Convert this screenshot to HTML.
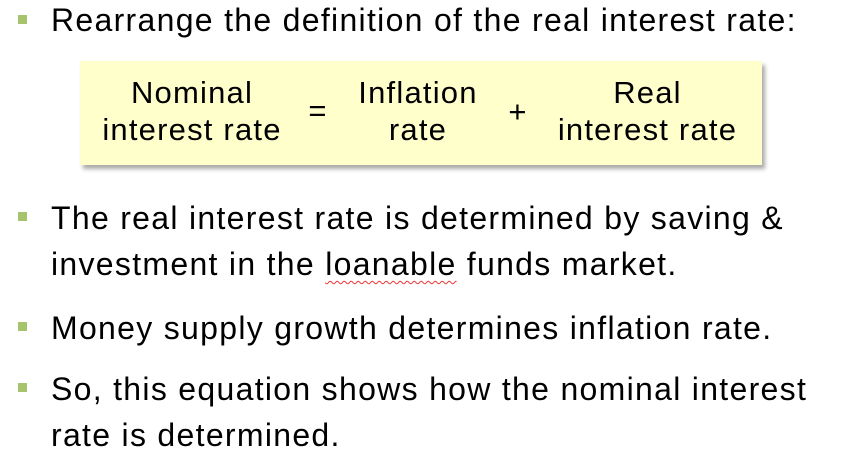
<!DOCTYPE html>
<html><head><style>
body{margin:0;width:844px;height:470px;background:#fff;position:relative;overflow:hidden;font-family:"Liberation Sans",Arial,sans-serif;color:#000}
.t{position:absolute;font-size:32px;line-height:46px;white-space:nowrap;letter-spacing:1.3px}
.b{position:absolute;width:9px;height:9px;background:#a6c46b}
.box{position:absolute;left:80px;top:61px;width:682px;height:104px;background:#ffffcc;box-shadow:3px 4px 4px #aaa}
.c{position:absolute;font-size:31px;line-height:37px;text-align:center;white-space:nowrap;letter-spacing:1.2px}
.sq{text-decoration:underline wavy #e33;text-decoration-thickness:1px;text-underline-offset:5px}
</style></head><body>
<div class="b" style="left:18px;top:15px"></div>
<div class="t" style="left:51px;top:-3px">Rearrange the definition of the real interest rate:</div>
<div class="box"></div>
<div class="c" style="left:82px;width:220px;top:74px">Nominal<br>interest rate</div>
<div class="c" style="left:300px;width:36px;top:92px">=</div>
<div class="c" style="left:348px;width:140px;top:74px">Inflation<br>rate</div>
<div class="c" style="left:500px;width:36px;top:93px">+</div>
<div class="c" style="left:540px;width:215px;top:74px">Real<br>interest rate</div>
<div class="b" style="left:18px;top:212px"></div>
<div class="t" style="left:51px;top:195px">The real interest rate is determined by saving &amp;<br>investment in the <span class="sq">loanable</span> funds market.</div>
<div class="b" style="left:18px;top:322px"></div>
<div class="t" style="left:51px;top:305px">Money supply growth determines inflation rate.</div>
<div class="b" style="left:18px;top:383px"></div>
<div class="t" style="left:51px;top:366px">So, this equation shows how the nominal interest<br>rate is determined.</div>
</body></html>
